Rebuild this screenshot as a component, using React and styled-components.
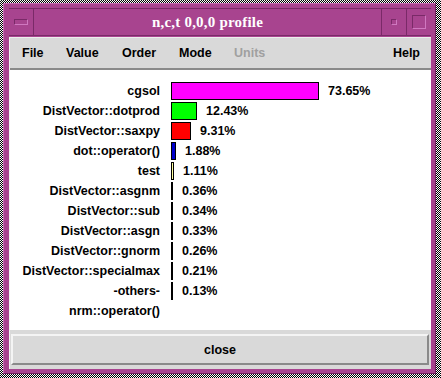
import React from "react";
import styled, { createGlobalStyle } from "styled-components";

const GlobalStyle = createGlobalStyle`
  html, body {
    margin: 0;
    padding: 0;
  }
  body {
    font-family: "Liberation Sans", Arial, sans-serif;
  }
`;

const rows = [
  { name: "cgsol", value: 73.65, color: "#ff00ff" },
  { name: "DistVector::dotprod", value: 12.43, color: "#00ff00" },
  { name: "DistVector::saxpy", value: 9.31, color: "#ff0000" },
  { name: "dot::operator()", value: 1.88, color: "#0000cc" },
  { name: "test", value: 1.11, color: "#ffffa0" },
  { name: "DistVector::asgnm", value: 0.36, color: "#000" },
  { name: "DistVector::sub", value: 0.34, color: "#000" },
  { name: "DistVector::asgn", value: 0.33, color: "#000" },
  { name: "DistVector::gnorm", value: 0.26, color: "#000" },
  { name: "DistVector::specialmax", value: 0.21, color: "#000" },
  { name: "-others-", value: 0.13, color: "#000" },
  { name: "nrm::operator()", value: null },
];

const menus = [
  { label: "File" },
  { label: "Value" },
  { label: "Order" },
  { label: "Mode" },
  { label: "Units", disabled: true },
];

const Desktop = styled.div`
  width: 441px;
  height: 378px;
  box-sizing: border-box;
  padding: 3px 5px 4px 3px;
  background: repeating-conic-gradient(#000 0 25%, #fff 0 50%) 0 0 / 2px 2px;
`;

const Window = styled.div`
  height: 100%;
  box-sizing: border-box;
  background: #a8448f;
  border: 1px solid #c86cb2;
  border-right-color: #6e1f5c;
  border-bottom-color: #6e1f5c;
  padding: 4px 4px 4px 5px;
  display: flex;
  flex-direction: column;
`;

const TitleBar = styled.div`
  height: 26px;
  display: flex;
  border-top: 1px solid #7a2a68;
  border-bottom: 1px solid #7a2a68;
  margin-bottom: 1px;
`;

const TitleButton = styled.div`
  width: ${(p) => p.$w || 24}px;
  display: flex;
  align-items: center;
  justify-content: center;
  border-left: ${(p) => (p.$left ? "1px solid #7a2a68" : "none")};
  border-right: ${(p) => (p.$right ? "1px solid #7a2a68" : "none")};
`;

const ButtonGlyph = styled.div`
  width: ${(p) => p.$w}px;
  height: ${(p) => p.$h}px;
  border: 1px solid #7a2a68;
  border-right-color: #d078c0;
  border-bottom-color: #d078c0;
`;

const Title = styled.div`
  flex: 1;
  display: flex;
  align-items: center;
  justify-content: center;
  color: #fff;
  font-family: "Liberation Serif", "Times New Roman", serif;
  font-weight: bold;
  font-size: 15px;
  letter-spacing: 0.2px;
`;

const Client = styled.div`
  flex: 1;
  display: flex;
  flex-direction: column;
  background: #d9d9d9;
  border-left: 1px solid #eee;
  border-top: 1px solid #eee;
`;

const MenuBar = styled.div`
  height: 30px;
  display: flex;
  align-items: center;
  padding: 0 0 0 12px;
  border-bottom: 2px solid #8a8a8a;
  font-weight: bold;
  font-size: 12.5px;
`;

const MenuItem = styled.div`
  width: ${(p) => p.$w}px;
  color: ${(p) => (p.$disabled ? "#a0a0a0" : "#000")};
  margin-left: ${(p) => (p.$push ? "auto" : "0")};
  margin-right: ${(p) => (p.$push ? "11px" : "0")};
`;

const Chart = styled.div`
  height: 260px;
  background: #fff;
  padding-top: 11px;
  box-sizing: border-box;
`;

const Row = styled.div`
  display: flex;
  align-items: center;
  height: 20px;
  font-weight: bold;
  font-size: 12.5px;
`;

const Label = styled.div`
  width: 150px;
  text-align: right;
  white-space: nowrap;
`;

const Bar = styled.div`
  margin-left: 11px;
  height: 18px;
  box-sizing: border-box;
  background: ${(p) => p.$color};
  border: 1px solid #000;
  flex: none;
`;

const Value = styled.div`
  margin-left: 9px;
`;

const Footer = styled.div`
  flex: 1;
  display: flex;
  align-items: center;
  padding: 0 2px 0 1px;
`;

const CloseButton = styled.div`
  flex: 1;
  height: 31px;
  box-sizing: border-box;
  display: flex;
  align-items: center;
  justify-content: center;
  background: #d9d9d9;
  border: 2px solid #f4f4f4;
  border-right-color: #8a8a8a;
  border-bottom-color: #8a8a8a;
  font-weight: bold;
  font-size: 12.5px;
`;

export default function App() {
  return (
    <>
      <GlobalStyle />
      <Desktop>
        <Window>
          <TitleBar>
            <TitleButton $right>
              <ButtonGlyph $w={12} $h={4} />
            </TitleButton>
            <Title>n,c,t 0,0,0 profile</Title>
            <TitleButton $left>
              <ButtonGlyph $w={4} $h={4} />
            </TitleButton>
            <TitleButton $left>
              <ButtonGlyph $w={12} $h={12} />
            </TitleButton>
          </TitleBar>
          <Client>
            <MenuBar>
              {menus.map((m, i) => (
                <MenuItem key={i} $w={[44, 56, 57, 55, 40][i]} $disabled={m.disabled}>
                  {m.label}
                </MenuItem>
              ))}
              <MenuItem $push>Help</MenuItem>
            </MenuBar>
            <Chart>
              {rows.map((r) => (
                <Row key={r.name}>
                  <Label>{r.name}</Label>
                  {r.value !== null && (
                    <>
                      <Bar
                        $color={r.color}
                        style={{ width: Math.max(2, Math.round(r.value * 2)) + (r.value > 1 ? 1 : 0) }}
                      />
                      <Value>{r.value.toFixed(2)}%</Value>
                    </>
                  )}
                </Row>
              ))}
            </Chart>
            <Footer>
              <CloseButton>close</CloseButton>
            </Footer>
          </Client>
        </Window>
      </Desktop>
    </>
  );
}
